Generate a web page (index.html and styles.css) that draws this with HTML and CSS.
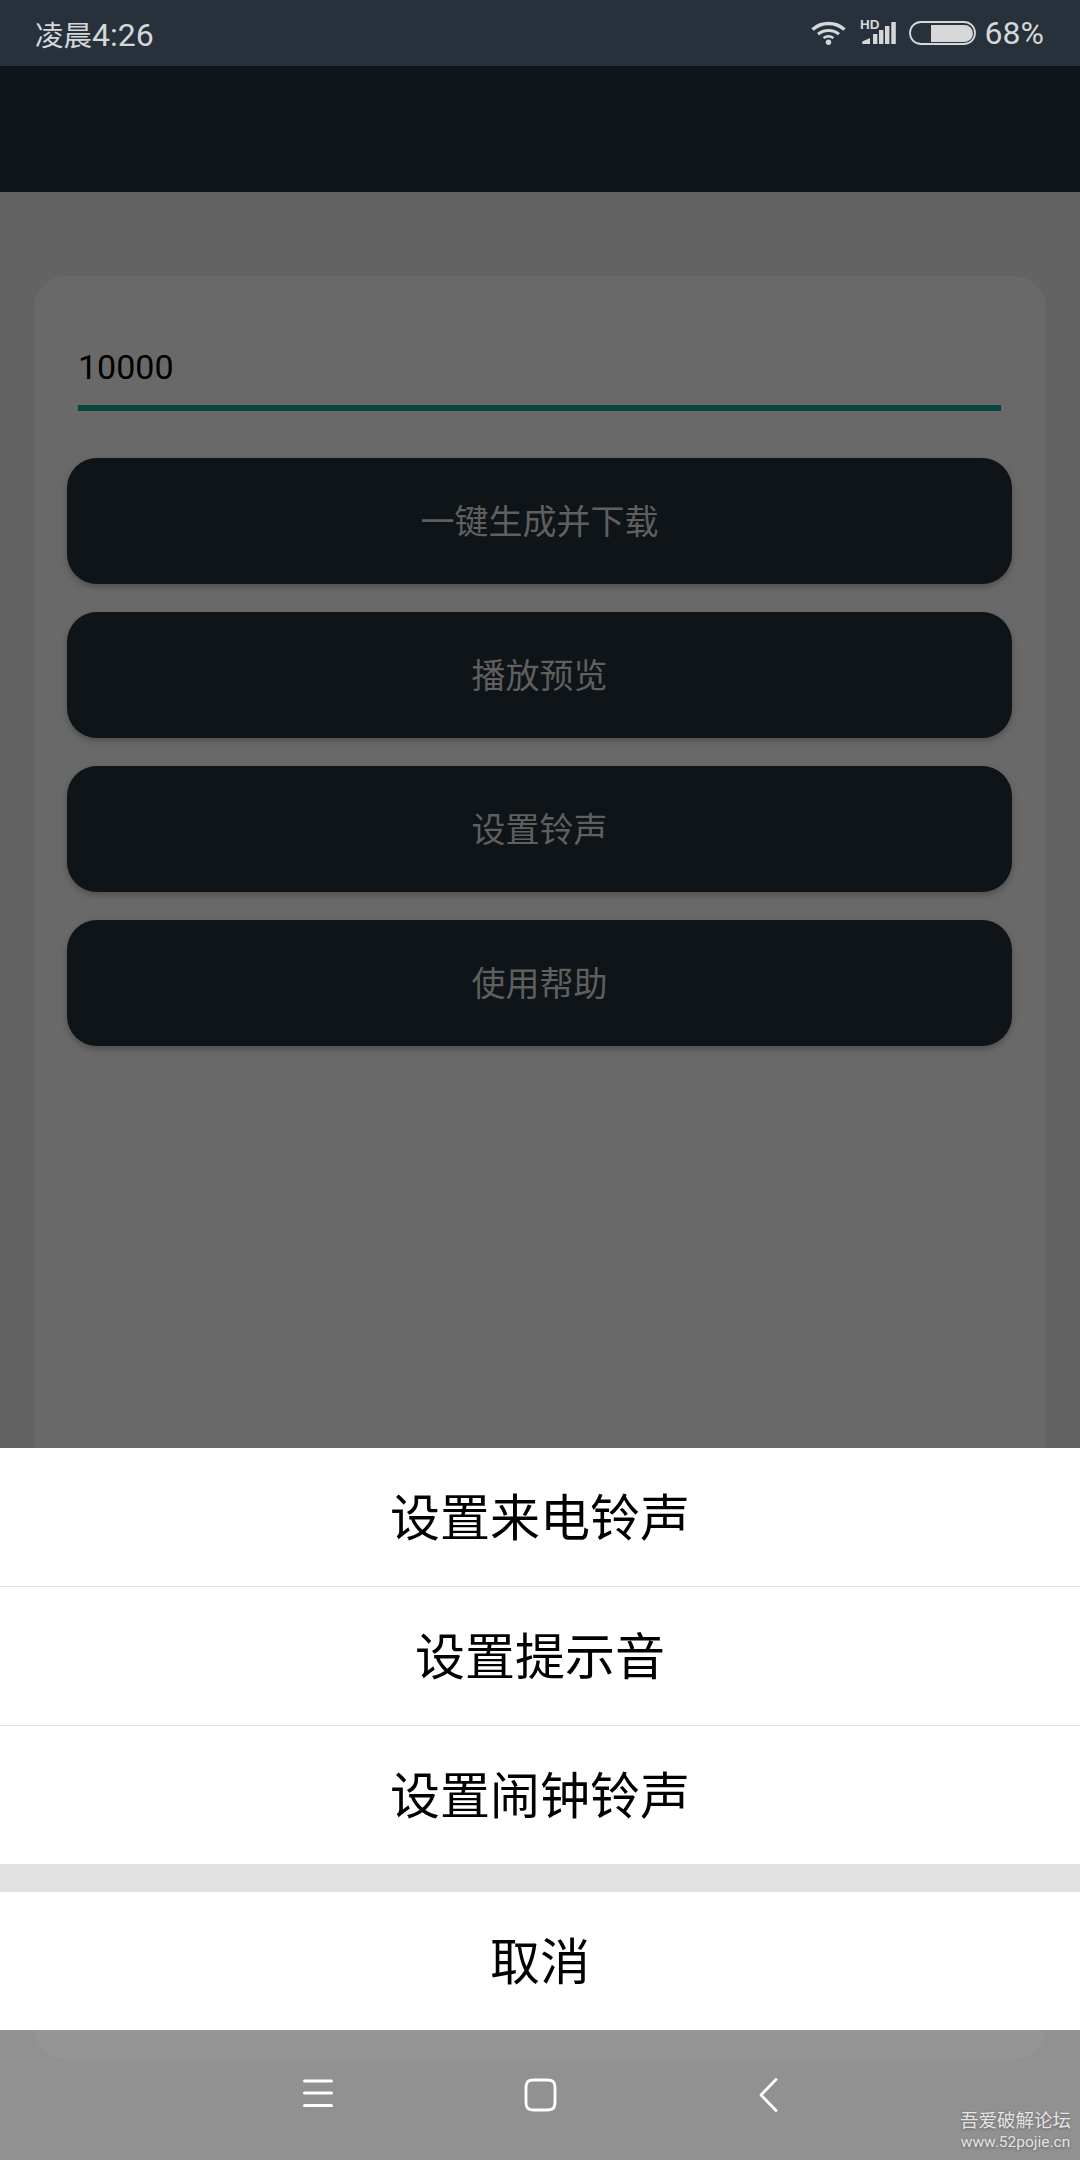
FILE: index.html
```html
<!DOCTYPE html>
<html lang="zh-CN">
<head>
    <meta charset="UTF-8">
    <title>铃声设置</title>
    <link rel="stylesheet" href="styles.css">
</head>
<body>
    <div class="screen">
        <div class="status-bar">
            <span class="time"><span class="time-cjk">凌晨</span>4:26</span>
            <div class="status-icons">
                <svg class="icon-wifi" width="35" height="24" viewBox="0 0 35 24">
                    <path d="M1.5 8.5C10.5 0.5 24.5 0.5 33.5 8.5" fill="none" stroke="#d5d7d9" stroke-width="3.4"/>
                    <path d="M7 13.2C13 8.2 22 8.2 28 13.2" fill="none" stroke="#d5d7d9" stroke-width="3"/>
                    <circle cx="17.5" cy="21.3" r="2.7" fill="#d5d7d9"/>
                    <path d="M12.5 17C15.5 14.8 19.5 14.8 22.5 17" fill="none" stroke="#d5d7d9" stroke-width="2.4"/>
                </svg>
                <svg class="icon-signal" width="36" height="29" viewBox="0 -3 36 29">
                    <text x="0" y="9.500" class="hd-text">HD</text>
                    <path d="M2.3 25V22.5L10 19V25Z" fill="#d5d7d9"/>
                    <rect x="13" y="15" width="4.4" height="10" fill="#d5d7d9"/>
                    <rect x="19" y="11" width="4.4" height="14" fill="#d5d7d9"/>
                    <rect x="25" y="7" width="4.4" height="18" fill="#d5d7d9"/>
                    <rect x="31.3" y="3" width="4.5" height="22" fill="#d5d7d9"/>
                </svg>
                <svg class="icon-battery" width="67" height="24" viewBox="0 0 67 24">
                    <rect x="1" y="1" width="65" height="22" rx="11" fill="none" stroke="#d5d7d9" stroke-width="1.8"/>
                    <path d="M22 4H55.5A8.5 8.5 0 0 1 55.5 21H22Z" fill="#d5d7d9"/>
                </svg>
                <span class="battery-text">68%</span>
            </div>
        </div>

        <div class="app-bar"></div>

        <div class="content">
            <div class="card">
                <div class="input-line">10000</div>
                <div class="btn">一键生成并下载</div>
                <div class="btn">播放预览</div>
                <div class="btn">设置铃声</div>
                <div class="btn">使用帮助</div>
            </div>
            <div class="nav-bar">
                <div class="nav-item">
                    <svg width="48" height="36" viewBox="0 0 48 36">
                        <path d="M13.500 4H40.500M13.500 16H40.500M13.500 28.500H40.500" fill="none" stroke="#fff" stroke-width="3" stroke-linecap="round"/>
                    </svg>
                </div>
                <div class="nav-item">
                    <svg width="48" height="36" viewBox="0 0 48 36">
                        <path d="M18 3H31C37 3 39 5 39 11V25C39 31 37 33 31 33H18C12 33 10 31 10 25V11C10 5 12 3 18 3Z" fill="none" stroke="#fff" stroke-width="2.800"/>
                    </svg>
                </div>
                <div class="nav-item">
                    <svg width="48" height="36" viewBox="0 0 48 36">
                        <path d="M35 2.500L20 18L35 33.500" fill="none" stroke="#fff" stroke-width="2.800" stroke-linecap="round" stroke-linejoin="round"/>
                    </svg>
                </div>
            </div>
            <div class="watermark">
                <div class="wm-title">吾爱破解论坛</div>
                <div class="wm-url">www.52pojie.cn</div>
            </div>
        </div>

        <div class="sheet">
            <div class="sheet-item">设置来电铃声</div>
            <div class="sheet-item">设置提示音</div>
            <div class="sheet-item">设置闹钟铃声</div>
            <div class="sheet-cancel">取消</div>
        </div>
    </div>
</body>
</html>
```

FILE: styles.css
```css
body {
    margin: 0;
    font-family: Roboto, 'Noto Sans CJK SC', sans-serif;
}

.screen {
    position: relative;
    width: 1080px;
    height: 2160px;
    display: flex;
    flex-direction: column;
    overflow: hidden;
}

.status-bar {
    height: 66px;
    box-sizing: border-box;
    padding: 0 36px 0 35px;
    display: flex;
    align-items: center;
    justify-content: space-between;
    background: #27313b;
    color: #d5d7d9;
    font-size: 32px;
}

.time-cjk {
    font-size: 28.5px;
}

.status-icons {
    display: flex;
    align-items: center;
}

.icon-wifi {
    margin-right: 14px;
}

.icon-signal {
    margin: -5px 13px 0 0;
}

.icon-battery {
    margin-right: 9px;
}

.hd-text {
    font-family: 'Liberation Sans', sans-serif;
    font-size: 13.5px;
    font-weight: bold;
    fill: #d5d7d9;
}

.app-bar {
    height: 126px;
    background: #0e1417;
}

/* the scrim is flat down to the sheet, the strip below the sheet is lighter */
.content {
    position: relative;
    flex: 1;
    display: flex;
    flex-direction: column;
    padding-top: 84px;
    background: linear-gradient(#636363 1500px, #919191 1500px);
}

.card {
    flex: 1;
    margin: 0 34px;
    padding: 0 34px 0 33px;
    border-radius: 32px;
    background: rgba(255, 255, 255, 0.04);
}

.input-line {
    margin: 0 11px 47px;
    height: 135px;
    box-sizing: border-box;
    padding-top: 68px;
    border-bottom: 6px solid #08453f;
    color: #000;
    font-size: 34px;
    line-height: 46px;
}

.btn {
    height: 126px;
    box-sizing: border-box;
    padding-bottom: 4px;
    margin-bottom: 28px;
    display: flex;
    align-items: center;
    justify-content: center;
    background: #0e1417;
    border-radius: 30px;
    box-shadow: 0 3px 6px rgba(0, 0, 0, 0.25);
    color: #5f5f5f;
    font-size: 34px;
}

.nav-bar {
    height: 101px;
    padding-bottom: 29px;
    box-sizing: border-box;
    display: flex;
    align-items: center;
    justify-content: center;
}

.nav-item {
    width: 225px;
    display: flex;
    justify-content: center;
}

.watermark {
    position: absolute;
    right: 9px;
    bottom: 8px;
    color: #e4e4e4;
    text-shadow: 0 1px 3px rgba(0, 0, 0, 0.35);
    text-align: center;
}

.wm-title {
    font-size: 18.5px;
    line-height: 22px;
}

.wm-url {
    font-size: 15.5px;
    line-height: 20px;
}

.sheet {
    position: absolute;
    left: 0;
    right: 0;
    top: 1448px;
    background: #fff;
    color: #000;
    font-size: 50px;
}

.sheet-item {
    height: 139px;
    box-sizing: border-box;
    padding-bottom: 6px;
    display: flex;
    align-items: center;
    justify-content: center;
    border-bottom: 1px solid #e4e4e4;
}

.sheet-item:nth-child(3) {
    height: 166px;
    border-bottom: 28px solid #e3e2e3;
}

.sheet-cancel {
    height: 138px;
    box-sizing: border-box;
    padding-bottom: 6px;
    display: flex;
    align-items: center;
    justify-content: center;
}
```
